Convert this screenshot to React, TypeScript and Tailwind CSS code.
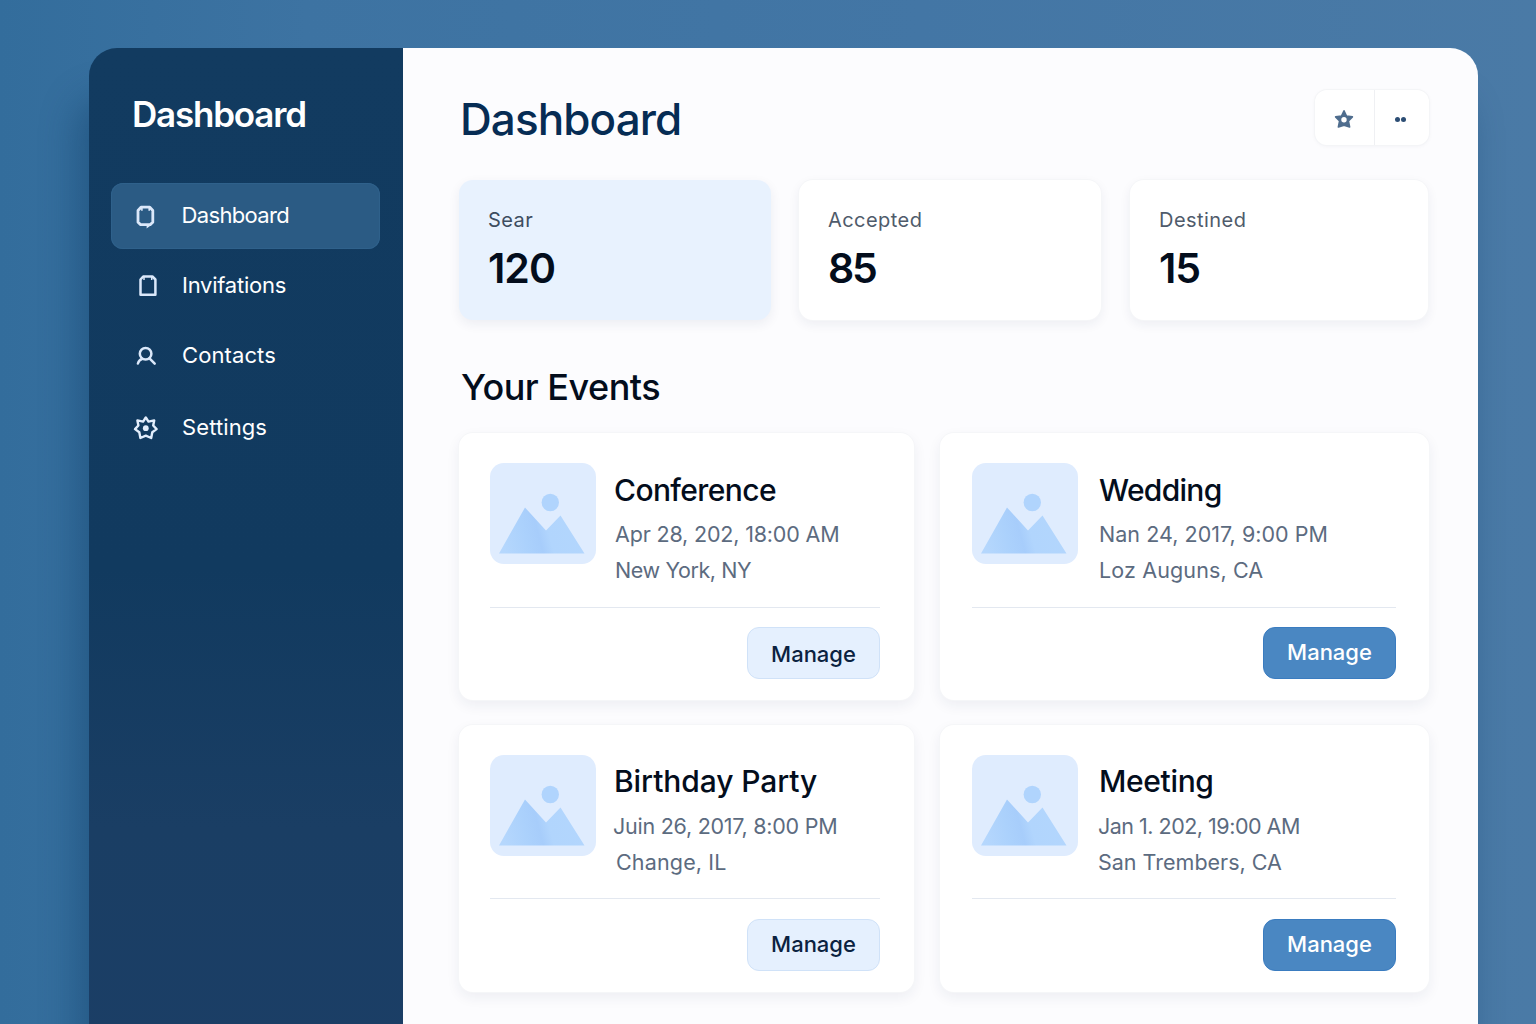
import React from "react";

function NoteIcon() {
  return (
    <svg width="24" height="26" viewBox="0 0 24 26" fill="none" stroke="#dbe8fa" strokeWidth="2.8" strokeLinejoin="round">
      <path d="M7 3.200h8.800l3 3.300v11.800l-2.600 2.300H6.600L4 18.300V6.500z" />
      <path d="M7.900 3.800v3M15.200 3.800v3" strokeWidth="1.600" />
      <path d="M12.600 20.600v3.800l5.400-4z" fill="#dbe8fa" stroke="none" />
    </svg>
  );
}

function ClipboardIcon() {
  return (
    <svg width="24" height="24" viewBox="0 0 24 24" fill="none" stroke="#dbe8fa" strokeWidth="2.500" strokeLinejoin="round">
      <path d="M7.200 2.500h9.200l3 3v15.300H4.500V5.500z" />
      <path d="M8 3.100v2.900M15.700 3.100v2.900" strokeWidth="1.500" />
    </svg>
  );
}

function ContactIcon() {
  return (
    <svg width="24" height="24" viewBox="0 0 24 24" fill="none" stroke="#dbe8fa" strokeWidth="2.500" strokeLinecap="round">
      <circle cx="11.600" cy="9.800" r="5.800" />
      <path d="M8 15c-2 .6-3.400 2-4.100 4.500M15.500 14.400l5.200 5.300" />
    </svg>
  );
}

function GearIcon() {
  return (
    <svg width="26" height="26" viewBox="0 0 26 26" fill="none" stroke="#e3eefc" strokeWidth="2.400" strokeLinejoin="round">
      <path d="M12.800 2.400L15.500 6.600L21.200 5.400L20.200 10.500L23.600 14.100L19.300 17.200L18.200 23L12.800 20.700L7.400 23L6.300 17.200L2 14.100L5.400 10.500L4.400 5.400L10.100 6.600z" />
      <circle cx="12.800" cy="13.200" r="2.900" fill="#e3eefc" stroke="none" />
    </svg>
  );
}

function StarIcon() {
  return (
    <svg width="20" height="20" viewBox="0 0 20 20" fill="#4f6d8e" stroke="#4f6d8e" strokeWidth="1.600" strokeLinejoin="round">
      <path d="M10 1.800L12.500 7L18.400 7.900L14.400 12L15.600 17.900L10 16.200L4.400 17.900L5.600 12L1.600 7.900L7.500 7z" />
      <circle cx="10" cy="10.800" r="2.700" fill="#fff" stroke="none" />
    </svg>
  );
}

function Thumbnail({ id }: { id: string }) {
  return (
    <svg className="h-[101px] w-[106px] shrink-0" viewBox="0 0 106 101">
      <defs>
        <linearGradient id={id} x1="10" y1="72" x2="92" y2="50" gradientUnits="userSpaceOnUse">
          <stop offset="0" stopColor="#b5d7fd" />
          <stop offset="0.280" stopColor="#abd1fc" />
          <stop offset="0.440" stopColor="#a7cdfb" />
          <stop offset="0.560" stopColor="#b1d5fd" />
          <stop offset="1" stopColor="#b3d6fd" />
        </linearGradient>
      </defs>
      <rect width="106" height="101" rx="14" fill="#dfecfe" />
      <circle cx="60.300" cy="39.500" r="8.700" fill="#b0d4fd" />
      <path d="M9 90.500L35 44.500L56 67.500L70.500 52.500L94.500 90.500z" fill={`url(#${id})`} />
    </svg>
  );
}

const navItems = [
  { label: "Dashboard", icon: <NoteIcon />, item: "h-[66px] bg-[#2b5b84] ring-1 ring-inset ring-[#2f618b]", text: "tracking-[-0.65px]", pos: "w-[70.500px] pl-[23px] pt-[2px]" },
  { label: "Invifations", icon: <ClipboardIcon />, item: "mt-1 h-[66px]", text: "tracking-[-0.250px]", pos: "w-[71px] pl-[25px]" },
  { label: "Contacts", icon: <ContactIcon />, item: "mt-1 h-[66px]", text: "tracking-[0.1px]", pos: "w-[71px] pl-[23px]" },
  { label: "Settings", icon: <GearIcon />, item: "mt-[6px] h-[66px]", text: "tracking-[0.1px]", pos: "w-[71px] pl-[22px]" },
];

const stats = [
  { label: "Sear", value: "120", box: "bg-[#e8f2fe]", labelStyle: "text-[#3d4d60]", valueStyle: "tracking-[-1px]" },
  { label: "Accepted", value: "85", box: "bg-white ring-1 ring-[#f5f6f8]", labelStyle: "text-[#4f5b6b]", valueStyle: "tracking-[-2.200px]" },
  { label: "Destined", value: "15", box: "bg-white ring-1 ring-[#f5f6f8]", labelStyle: "text-[#4f5b6b]", valueStyle: "tracking-[-1px]" },
];

const events = [
  { id: "conference", title: "Conference", date: "Apr 28, 202, 18:00 AM", place: "New York, NY", primary: false, head: "h-[145px]", foot: "pt-[19px]", button: "pt-[2px]", titleStyle: "tracking-[-0.600px]", dateStyle: "pl-px tracking-[-0.170px]", placeStyle: "pl-px tracking-[-0.4px]" },
  { id: "wedding", title: "Wedding", date: "Nan 24, 2017, 9:00 PM", place: "Loz Auguns, CA", primary: true, head: "h-[145px]", foot: "pt-[19px]", button: "pb-[2px]", titleStyle: "tracking-[-0.7px]", dateStyle: "tracking-[0.040px]", placeStyle: "tracking-[0.130px]" },
  { id: "birthday", title: "Birthday Party", date: "Juin 26, 2017, 8:00 PM", place: "Change, IL", primary: false, head: "h-[144px]", foot: "pt-5", button: "pb-[2px]", titleStyle: "-mt-px pb-px tracking-[-0.080px]", dateStyle: "-ml-px tracking-[-0.250px]", placeStyle: "pl-[2px] tracking-[0.150px]" },
  { id: "meeting", title: "Meeting", date: "Jan 1. 202, 19:00 AM", place: "San Trembers, CA", primary: true, head: "h-[144px]", foot: "pt-5", button: "pb-[2px]", titleStyle: "-mt-px pb-px tracking-[-0.350px]", dateStyle: "-ml-px tracking-[-0.5px]", placeStyle: "-ml-px tracking-[0px]" },
];

export default function App() {
  return (
    <div className="h-[1024px] w-[1536px] overflow-hidden bg-[linear-gradient(90deg,#336d9c_0%,#3d73a2_20%,#4376a5_60%,#4a7aa6_100%)] pl-[89px] pt-12 font-['Inter',sans-serif]">
      <div className="flex h-[1040px] w-[1389px] overflow-hidden rounded-t-[28px] shadow-[-12px_50px_36px_rgba(10,55,95,0.4)]">
        <aside className="w-[314px] shrink-0 bg-[linear-gradient(180deg,#123b60_0%,#113a5f_50%,#1a3e64_75%,#1b3e66_100%)] px-[22px] text-white">
          <h2 className="mt-[44px] pl-[21px] text-[35px] font-semibold leading-[44px] tracking-[-1.2px]">Dashboard</h2>
          <nav className="mt-[47px] flex w-[269px] flex-col">
            {navItems.map((n) => (
              <div key={n.label} className={`flex items-center rounded-xl ${n.item}`}>
                <div className={`shrink-0 ${n.pos}`}>{n.icon}</div>
                <span className={`pb-[2px] text-[22px] leading-7 ${n.text}`}>{n.label}</span>
              </div>
            ))}
          </nav>
        </aside>
        <main className="flex-1 bg-[#fcfcfe] pl-14 pt-[42px]">
          <header className="flex h-[55px] w-[970px] items-center justify-between">
            <h1 className="pl-px pt-[3px] text-[44px] font-[450] leading-[55px] tracking-[-0.9px] text-[#062c54]">Dashboard</h1>
            <div className="flex h-[55px] w-[114px] rounded-xl bg-white shadow-[0_1px_4px_rgba(20,40,80,0.05)] ring-1 ring-[#f4f5f7]">
              <button className="flex w-[60px] items-center justify-center border-r border-[#eff0f3] pr-[2px] pt-[2px]"><StarIcon /></button>
              <button className="flex flex-1 items-center justify-center gap-px pr-1 pt-[3px]">
                <span className="size-[5px] rounded-full bg-[#2c4d74]" />
                <span className="size-[5px] rounded-full bg-[#2c4d74]" />
              </button>
            </div>
          </header>
          <section className="mt-[35px] grid grid-cols-[312px_302px_299px] gap-x-7">
            {stats.map((s) => (
              <div key={s.label} className={`h-[140px] rounded-[14px] pl-[29px] pt-[26px] shadow-[0_4px_12px_rgba(30,40,80,0.07)] last:ml-px ${s.box}`}>
                <div className={`text-[20px] leading-7 tracking-[0.450px] ${s.labelStyle}`}>{s.label}</div>
                <div className={`mt-[8px] text-[41px] font-semibold leading-[52px] text-[#030d1c] ${s.valueStyle}`}>{s.value}</div>
              </div>
            ))}
          </section>
          <h2 className="mt-[44px] pl-[2px] text-[36px] font-[550] leading-[46px] tracking-[-0.5px] text-[#030d1c]">Your Events</h2>
          <section className="mt-[23px] grid grid-cols-[455px_489px] gap-x-[26px] gap-y-[25px]">
            {events.map((e) => (
              <article key={e.id} className={`h-[267px] rounded-[14px] bg-white pt-[30px] shadow-[0_5px_14px_rgba(30,40,80,0.07)] ring-1 ring-[#f5f6f8] ${e.primary ? "pl-8 pr-[33px]" : "pl-[31px] pr-[34px]"}`}>
                <div className={`flex border-b border-[#e3e8f0] ${e.head}`}>
                  <Thumbnail id={e.id} />
                  <div className={`whitespace-nowrap pt-[8px] ${e.primary ? "pl-[21px]" : "pl-[18px]"}`}>
                    <h3 className={`text-[30px] font-medium leading-[38px] text-[#030d1c] ${e.titleStyle}`}>{e.title}</h3>
                    <p className={`mt-[7px] text-[21.5px] leading-9 text-[#5c6b80] ${e.dateStyle}`}>{e.date}</p>
                    <p className={`text-[21.5px] leading-9 text-[#5c6b80] ${e.placeStyle}`}>{e.place}</p>
                  </div>
                </div>
                <div className={`flex justify-end ${e.foot}`}>
                  <button className={`h-[52px] w-[133px] rounded-xl border text-[22px] font-medium ${e.button} ${e.primary ? "border-[#3a7cc0] bg-[#4a87c2] text-white" : "border-[#d0e2f8] bg-[#e5f0fe] text-[#0b2240]"}`}>Manage</button>
                </div>
              </article>
            ))}
          </section>
        </main>
      </div>
    </div>
  );
}
